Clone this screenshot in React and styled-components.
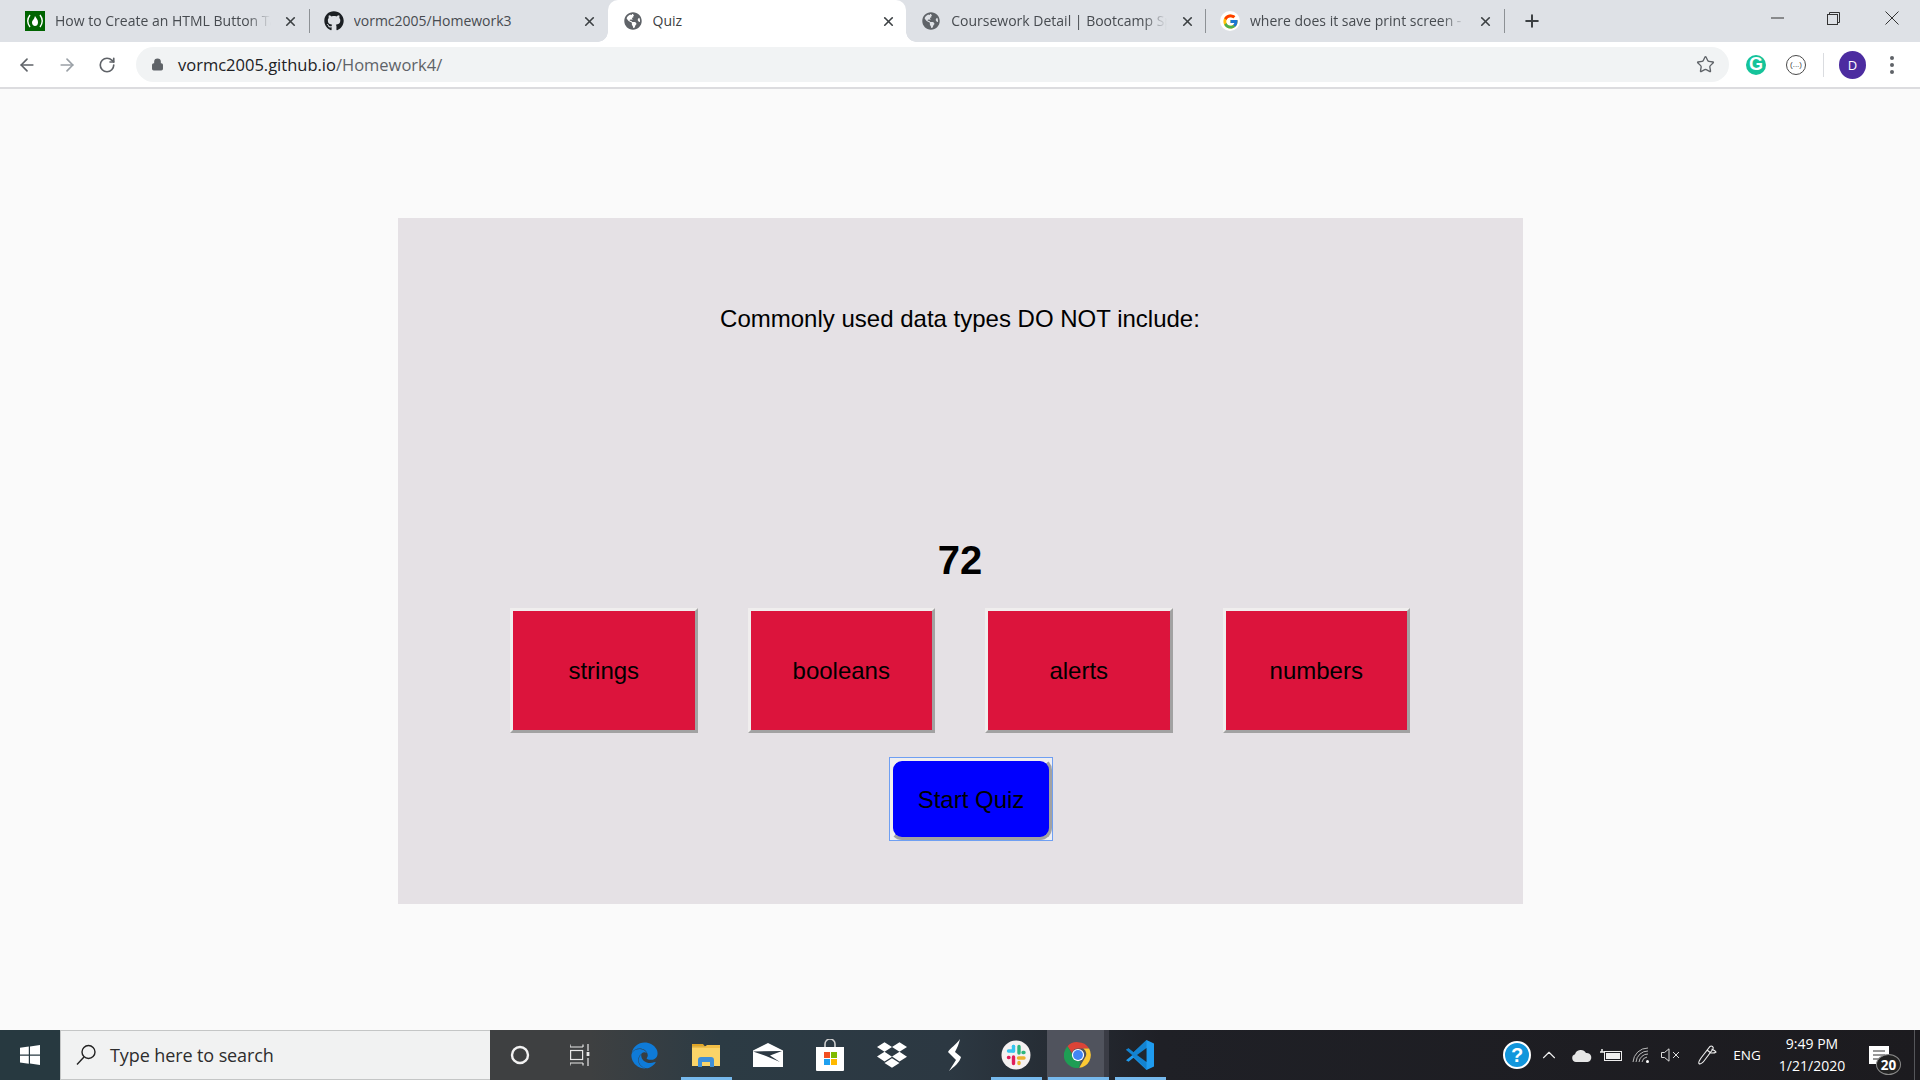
import React from "react";
import styled, { createGlobalStyle } from "styled-components";
import { ArrowLeft, ArrowRight, RotateCw, Lock, Star, X, Plus, ChevronUp } from "lucide-react";
import { FaGithub, FaGlobeAmericas, FaDropbox, FaEdge } from "react-icons/fa";
import { FcGoogle } from "react-icons/fc";

const Global = createGlobalStyle`
  html, body { margin: 0; padding: 0; height: 100%; overflow: hidden; }
  body { font-family: "Liberation Sans", Arial, sans-serif; background: #fafafa; }
  #root { height: 100%; }
`;
const Screen = styled.div`width:1920px;height:1080px;display:flex;flex-direction:column;overflow:hidden;`;
const TabBar = styled.div`height:42px;flex:none;background:#dee1e6;display:flex;align-items:stretch;padding-left:10px;`;
const Tab = styled.div`
  width:298.75px;flex:none;position:relative;box-sizing:border-box;display:flex;align-items:center;padding:0 8px 0 15px;gap:10px;
  font-family:"Open Sans","Noto Sans",sans-serif;font-size:14px;color:${p=>p.$active?"#3c4043":"#474b50"};
  background:${p=>p.$active?"#fff":"transparent"};
  border-radius:${p=>p.$active?"10px 10px 0 0":"0"};
  ${p=>p.$sep?`&::after{content:"";position:absolute;right:-1px;top:9px;height:24px;width:1px;background:#8d9195;}`:""}
  ${p=>p.$active?`
    &::before{content:"";position:absolute;left:-10px;bottom:0;width:10px;height:10px;background:radial-gradient(circle at 0 0,transparent 9.5px,#fff 10px);}
    &::after{content:"";position:absolute;right:-10px;bottom:0;width:10px;height:10px;background:radial-gradient(circle at 100% 0,transparent 9.5px,#fff 10px);}
  `:""}
`;
const Favicon = styled.span`width:20px;height:20px;flex:none;display:flex;align-items:center;justify-content:center;color:${p=>p.$color||"#5f6368"};`;
const FccIcon = styled.span`width:20px;height:20px;background:#006400;color:#fff;display:flex;align-items:center;justify-content:center;`;
const GoogleBadge = styled.span`width:20px;height:20px;border-radius:50%;background:#fff;display:flex;align-items:center;justify-content:center;`;
const TabTitle = styled.span`flex:1;min-width:0;white-space:nowrap;overflow:hidden;line-height:20px;margin-top:-1px;
  ${p=>p.$fade?"mask-image:linear-gradient(90deg,#000 calc(100% - 24px),transparent);":""}`;
const CloseBtn = styled.span`width:20px;height:20px;flex:none;display:flex;align-items:center;justify-content:center;color:#3c4043;`;
const NewTab = styled.div`width:56px;flex:none;display:flex;align-items:center;justify-content:center;color:#3c4043;`;
const TabSpacer = styled.div`flex:1;`;
const WinControls = styled.div`display:flex;align-items:flex-start;color:#3a3a3a;`;
const WinBtn = styled.div`width:${p=>p.$w}px;height:36px;display:flex;align-items:center;justify-content:center;`;

const Toolbar = styled.div`height:45px;flex:none;background:#fff;display:flex;align-items:center;box-sizing:border-box;padding:0 0 0 7px;color:#5f6368;`;
const NavBtn = styled.div`width:40px;height:35px;display:flex;align-items:center;justify-content:center;color:${p=>p.$off?"#9aa0a6":"#5f6368"};`;
const Omnibox = styled.div`margin-left:9px;width:1593px;height:35px;background:#f1f3f4;border-radius:18px;display:flex;align-items:center;padding:0 14px 0 15px;box-sizing:border-box;`;
const Url = styled.div`flex:1;margin-left:14px;font-family:"Open Sans","Noto Sans",sans-serif;font-size:16.5px;color:#5f6368;white-space:nowrap;`;
const Host = styled.span`color:#202124;`;
const ExtGroup = styled.div`display:flex;align-items:center;margin-left:7px;`;
const Ext = styled.div`width:40px;height:35px;display:flex;align-items:center;justify-content:center;`;
const GrammarlyDot = styled.div`width:20px;height:20px;border-radius:50%;background:#15c39a;color:#fff;font:bold 18px "Liberation Sans",sans-serif;display:flex;align-items:center;justify-content:center;`;
const RingExt = styled.div`width:18px;height:18px;border-radius:50%;border:1px solid #4a4a4a;color:#444;font:8px "Liberation Sans",sans-serif;display:flex;align-items:center;justify-content:center;`;
const ToolSep = styled.div`width:1px;height:24px;background:#dadce0;margin:0 9px 0 7px;`;
const Avatar = styled.div`width:27px;height:28px;border-radius:50%;background:#4c2ca0;color:#fff;font:13px "Open Sans",sans-serif;display:flex;align-items:center;justify-content:center;margin:0 10px 0 6px;`;
const Kebab = styled.div`width:4px;display:flex;flex-direction:column;gap:3px;margin-left:14px;`;
const KDot = styled.span`width:4px;height:4px;border-radius:50%;background:#5f6368;`;
const Divider = styled.div`height:2px;flex:none;background:#dcdcdf;`;

const Page = styled.main`flex:1;min-height:0;background:#fafafa;display:flex;justify-content:center;align-items:flex-start;`;
const Panel = styled.section`margin-top:129px;width:1125px;height:686px;background:#e5e1e5;display:flex;flex-direction:column;align-items:center;`;
const Question = styled.p`margin:87px 0 0;font-size:24px;line-height:28px;color:#000;`;
const Timer = styled.div`margin-top:204px;font-size:40px;font-weight:bold;line-height:46px;color:#000;`;
const Answers = styled.div`margin-top:25px;display:flex;gap:50px;`;
const Answer = styled.button`width:187.5px;height:125px;box-sizing:border-box;background:#dc143c;color:#000;font:24px "Liberation Sans",Arial,sans-serif;border:3px solid;border-color:#f0eeee #a2a2a2 #a2a2a2 #f0eeee;padding:0;`;
const FocusRing = styled.div`margin:24px 0 0 22px;border:1px solid #6f9ff2;background:#eeeef2;display:flex;`;
const Start = styled.button`width:162px;height:82px;box-sizing:border-box;background:#00f;color:#000;font:24px "Liberation Sans",Arial,sans-serif;border:3px solid;border-color:#f0eeee #a2a2a2 #a2a2a2 #f0eeee;border-radius:12px;padding:1px 0 0;`;

const Taskbar = styled.footer`height:50px;flex:none;box-sizing:border-box;display:flex;align-items:stretch;color:#fff;
  background:linear-gradient(90deg,#273940 0,#273940 60px,#3e4041 490px,#3e4041 590px,#2c3b44 720px,#2c3842 950px,#1f2026 1160px,#1c1b1f 1920px);`;
const StartBtn = styled.div`width:60px;flex:none;display:flex;align-items:center;justify-content:center;`;
const SearchBox = styled.div`width:430px;flex:none;box-sizing:border-box;background:#f1f2f2;border:1px solid #c4c6c6;border-width:1px 0 1px 1px;display:flex;align-items:center;padding-left:14px;gap:13px;color:#2d2d2d;font:18px "Open Sans","Noto Sans",sans-serif;`;
const SearchText = styled.span`letter-spacing:-.1px;`;
const Slots = styled.div`display:flex;`;
const WideSlots = styled.div`display:flex;margin-left:3px;`;
const Slot = styled.div`width:${p=>p.$w||62}px;flex:none;position:relative;display:flex;align-items:center;justify-content:center;
  ${p=>p.$focus?"background:linear-gradient(90deg,#50535d 0,#50535d 57px,#3a3c45 57px);":""}
  ${p=>p.$on?`&::after{content:"";position:absolute;bottom:0;left:${p.$focus?"1px":"6px"};right:${p.$focus?"0":"5px"};height:3px;background:#76b9ed;}`:""}
`;
const Tray = styled.div`margin-left:auto;display:flex;align-items:center;`;
const TrayItem = styled.div`width:${p=>p.$w}px;flex:none;height:100%;display:flex;align-items:center;justify-content:center;`;
const Lang = styled.div`width:40px;text-align:center;font:13.5px "Open Sans",sans-serif;color:#fff;`;
const Clock = styled.div`width:90px;margin-right:7px;text-align:center;font:14px/22px "Open Sans",sans-serif;color:#fff;`;
const Notify = styled.div`width:50px;height:100%;box-sizing:border-box;position:relative;display:flex;align-items:center;padding-left:5px;`;
const Badge = styled.div`position:absolute;left:12px;top:24px;width:25px;height:21px;border-radius:50%;box-sizing:border-box;border:1px solid #8a8a8a;background:#222;color:#fff;font:bold 13.5px "Open Sans",sans-serif;display:flex;align-items:center;justify-content:center;`;
const HelpIcon = styled.div`width:24px;height:24px;border-radius:50%;border:2px solid #fff;background:#1296dc;color:#fff;font:bold 20px "Liberation Sans",sans-serif;display:flex;align-items:center;justify-content:center;`;
const EdgeLine = styled.div`width:6px;height:100%;box-sizing:border-box;border-left:1px solid #55565a;`;

const ChromeLogo = () => (
  <svg width="28" height="28" viewBox="0 0 48 48">
    <path d="M24 2a22 22 0 0 1 19 11H24a11 11 0 0 0-10.5 7.5L6 9A22 22 0 0 1 24 2z" fill="#db4437"/>
    <path d="M43 13a22 22 0 0 1-17 33l9.5-16.5A11 11 0 0 0 33 13z" fill="#fcc934"/>
    <path d="M6 9l9.5 16.5A11 11 0 0 0 28 34.5L26 46A22 22 0 0 1 6 9z" fill="#1e9e54"/>
    <circle cx="24" cy="24" r="10.5" fill="#fff"/><circle cx="24" cy="24" r="8.5" fill="#4285f4"/>
  </svg>
);
const SlackLogo = () => (
  <svg width="30" height="30" viewBox="0 0 30 30">
    <circle cx="15" cy="15" r="14.5" fill="#f4f1f1"/>
    <g strokeWidth="3.4" strokeLinecap="round">
      <path d="M12.5 6.5v0M12.5 11H7.5" stroke="#36c5f0"/><path d="M12.5 6.5v4.5" stroke="#36c5f0"/>
      <path d="M18 6.5v6.5M23 12.5h-1" stroke="#2eb67d"/>
      <path d="M18 23.5v-1M17.5 18H23" stroke="#ecb22e"/>
      <path d="M12.5 23.5V17M7.5 17.5h.5" stroke="#e01e5a"/>
    </g>
  </svg>
);
const VSCode = () => (
  <svg width="30" height="32" viewBox="0 0 30 32">
    <path d="M21.5 1l7.5 3.5v23L21.5 31 8.5 18.8l-5 3.9L1 21.3 7.5 16 1 10.7l2.5-1.4 5 3.9z" fill="#1f9cf0"/>
    <path d="M21.5 1L8.5 13.2l-5-3.9L1 10.7 15 24 21.5 31z" fill="#0a6fb8" opacity=".55"/>
    <path d="M21.500 9L12 16l9.500 7z" fill="#202830"/>
  </svg>
);
const Explorer = () => (
  <svg width="28" height="26" viewBox="0 0 28 26">
    <path d="M0 2h11l2 2.5H0z" fill="#e0a526"/><path d="M0 4.5h28V24H0z" fill="#fbd468"/>
    <path d="M0 4.5h13l2-1.5h13v3H0z" fill="#f3bf47"/>
    <path d="M6 25v-7a3 3 0 0 1 3-3h10a3 3 0 0 1 3 3v7h-4v-5h-8v5z" fill="#3f8fd8"/>
  </svg>
);
const Mail = () => (
  <svg width="30" height="24" viewBox="0 0 30 24">
    <path d="M0 7.500L15 0l15 7.500V24H0z" fill="#fff"/>
    <path d="M0 8.500L29 8 17 12.500 27 19 13 13z" fill="#2c3842"/>
  </svg>
);
const Store = () => (
  <svg width="28" height="32" viewBox="0 0 28 32">
    <path d="M9 8V5a5 5 0 0 1 10 0v3" fill="none" stroke="#cfcfcf" strokeWidth="1.6"/>
    <path d="M0 8h28v23a1 1 0 0 1-1 1H1a1 1 0 0 1-1-1z" fill="#fff"/>
    <path d="M8 13h6v6H8z" fill="#f25022"/><path d="M15 13h6v6h-6z" fill="#7fba00"/>
    <path d="M8 20h6v6H8z" fill="#1fa0f0"/><path d="M15 20h6v6h-6z" fill="#ffb900"/>
  </svg>
);
const Fuse = () => (
  <svg width="14" height="32" viewBox="0 0 14 32">
    <path d="M13 0C10 5 3 9 1 13l8 8-7 11c5-4 11-9 12-14l-6-5c2-4 4-8 5-13z" fill="#fff"/>
  </svg>
);
const Windows = () => (
  <svg width="20" height="20" viewBox="0 0 20 20"><path d="M0 2.8l8.8-1.2v8H0zM10 1.4L20 0v9.6H10zM0 10.8h8.8v8L0 17.5zM10 10.8h10V20l-10-1.4z" fill="#fff"/></svg>
);
const SearchGlyph = () => (
  <svg width="22" height="22" viewBox="0 0 22 22" fill="none" stroke="#222" strokeWidth="1.4"><circle cx="13.5" cy="8" r="6.5"/><path d="M9 13L2 20.5"/></svg>
);
const TaskView = () => (
  <svg width="20" height="22" viewBox="0 0 20 22" fill="none" stroke="#e8e8e8" strokeWidth="1.2"><path d="M0 3h13M0 .6v2.4M13 .6v2.4M0 19h13M0 21.5V19M13 21.5V19"/><rect x=".6" y="6.5" width="12" height="9"/><path d="M18 0v7M18 14v8"/><rect x="16.6" y="8" width="2.8" height="4" fill="#e8e8e8" stroke="none"/></svg>
);
const Cloud = () => (<svg width="22" height="14" viewBox="0 0 22 14"><path d="M6 14a4 4 0 0 1-1-7.8A6 6 0 0 1 16 5a4.5 4.5 0 0 1 1.5 9z" fill="#e6e6e6"/></svg>);
const Battery = () => (<svg width="22" height="14" viewBox="0 0 22 14" fill="none" stroke="#eee"><rect x="4.5" y="3.5" width="17" height="9"/><rect x="6" y="5" width="14" height="6" fill="#eee" stroke="none"/><path d="M0 4h4M2 1v3" strokeWidth="1.5"/></svg>);
const Wifi = () => (<svg width="18" height="18" viewBox="0 0 18 18" fill="none" stroke="#bbb" strokeWidth="1"><path d="M1 16A15 15 0 0 1 16 2M4 16A12 12 0 0 1 16 5M7 16A9 9 0 0 1 16 8M10 16a6 6 0 0 1 5-5"/><circle cx="15.5" cy="15.5" r="1.5" fill="#fff" stroke="none"/></svg>);
const Volume = () => (<svg width="20" height="14" viewBox="0 0 20 14" fill="none" stroke="#ddd"><path d="M.5 4.5h3L8 .8v12.4L3.5 9.5h-3zM12 4l6 6M18 4l-6 6"/></svg>);
const Pen = () => (<svg width="22" height="22" viewBox="0 0 22 22" fill="none" stroke="#eee" strokeWidth="1.1"><path d="M5 14L14 2.500a2 2 0 0 1 3 2.500L8 17c-1.500 2-4 3.500-5 2.500s.500-3 2-5.500zM11 6l3.500 2.800M15.500 5c2 1 3.500 1.500 4.500 3-1.500 1.500-4 1-6.500 1"/></svg>);
const NoteIcon = () => (<svg width="20" height="18" viewBox="0 0 20 18"><path d="M0 0h20v18H0z" fill="#fff"/><path d="M4 5h12M4 9h12M4 13h9" stroke="#333" strokeWidth="1.2"/></svg>);
const FccGlyph = () => (<svg width="16" height="14" viewBox="0 0 16 14" fill="none" stroke="#fff" strokeWidth="1.4"><path d="M3 1C0 5 0 9 3 13M13 1c3 4 3 8 0 12"/><path d="M8 2c2 3 3 4 3 6.500S9.500 12 8 12s-3-1.500-3-3.500S7 6 8 2z" fill="#fff" stroke="none"/></svg>);
const MinGlyph = () => (<svg width="13" height="2"><path d="M0 1h13" stroke="#333"/></svg>);
const RestoreGlyph = () => (<svg width="13" height="13" viewBox="0 0 13 13" fill="none" stroke="#333"><rect x=".5" y="2.500" width="10" height="10"/><path d="M2.500 2.500V.5h10v10h-2"/></svg>);
const CloseGlyph = () => (<svg width="14" height="14" viewBox="0 0 14 14" stroke="#333"><path d="M.5.5l13 13M13.500.5l-13 13"/></svg>);

const TabClose = () => <CloseBtn><X size={15} strokeWidth={2.6} /></CloseBtn>;

export default function App() {
  return (
    <Screen>
      <Global />
      <TabBar>
        <Tab $sep><Favicon><FccIcon><FccGlyph /></FccIcon></Favicon><TabTitle $fade>How to Create an HTML Button Tag</TabTitle><TabClose /></Tab>
        <Tab><Favicon $color="#1b1f23"><FaGithub size={20} /></Favicon><TabTitle>vormc2005/Homework3</TabTitle><TabClose /></Tab>
        <Tab $active><Favicon><FaGlobeAmericas size={18} /></Favicon><TabTitle>Quiz</TabTitle><TabClose /></Tab>
        <Tab $sep><Favicon><FaGlobeAmericas size={18} /></Favicon><TabTitle $fade>Coursework Detail | Bootcamp Spot</TabTitle><TabClose /></Tab>
        <Tab $sep><Favicon><GoogleBadge><FcGoogle size={17} /></GoogleBadge></Favicon><TabTitle $fade>where does it save print screen - Google Search</TabTitle><TabClose /></Tab>
        <NewTab><Plus size={20} strokeWidth={2.4} /></NewTab>
        <TabSpacer />
        <WinControls>
          <WinBtn $w={50}><MinGlyph /></WinBtn><WinBtn $w={62}><RestoreGlyph /></WinBtn><WinBtn $w={56}><CloseGlyph /></WinBtn>
        </WinControls>
      </TabBar>
      <Toolbar>
        <NavBtn><ArrowLeft size={20} strokeWidth={2} /></NavBtn>
        <NavBtn $off><ArrowRight size={20} strokeWidth={2} /></NavBtn>
        <NavBtn><RotateCw size={18} strokeWidth={2.2} /></NavBtn>
        <Omnibox>
          <Lock size={13} fill="#5f6368" strokeWidth={2.2} />
          <Url><Host>vormc2005.github.io</Host>/Homework4/</Url>
          <Star size={19} strokeWidth={1.7} color="#5f6368" />
        </Omnibox>
        <ExtGroup>
          <Ext><GrammarlyDot>G</GrammarlyDot></Ext>
          <Ext><RingExt>(...)</RingExt></Ext>
          <ToolSep />
          <Avatar>D</Avatar>
          <Kebab><KDot /><KDot /><KDot /></Kebab>
        </ExtGroup>
      </Toolbar>
      <Divider />
      <Page>
        <Panel>
          <Question>Commonly used data types DO NOT include:</Question>
          <Timer>72</Timer>
          <Answers>
            <Answer>strings</Answer>
            <Answer>booleans</Answer>
            <Answer>alerts</Answer>
            <Answer>numbers</Answer>
          </Answers>
          <FocusRing><Start>Start Quiz</Start></FocusRing>
        </Panel>
      </Page>
      <Taskbar>
        <StartBtn><Windows /></StartBtn>
        <SearchBox><SearchGlyph /><SearchText>Type here to search</SearchText></SearchBox>
        <Slots>
          <Slot $w={60}><svg width="20" height="20"><circle cx="10" cy="10" r="8" fill="none" stroke="#f2f2f2" strokeWidth="2.4"/></svg></Slot>
          <Slot $w={60}><TaskView /></Slot>
        </Slots>
        <WideSlots>
          <Slot><FaEdge size={27} color="#0f7bd8" /></Slot>
          <Slot $on><Explorer /></Slot>
          <Slot><Mail /></Slot>
          <Slot><Store /></Slot>
          <Slot><FaDropbox size={30} color="#fff" /></Slot>
          <Slot><Fuse /></Slot>
          <Slot $on><SlackLogo /></Slot>
          <Slot $on $focus><ChromeLogo /></Slot>
          <Slot $on><VSCode /></Slot>
        </WideSlots>
        <Tray>
          <TrayItem $w={30}><HelpIcon>?</HelpIcon></TrayItem>
          <TrayItem $w={34}><ChevronUp size={22} strokeWidth={1.2} color="#eee" /></TrayItem>
          <TrayItem $w={30}><Cloud /></TrayItem>
          <TrayItem $w={30}><Battery /></TrayItem>
          <TrayItem $w={30}><Wifi /></TrayItem>
          <TrayItem $w={30}><Volume /></TrayItem>
          <TrayItem $w={41}><Pen /></TrayItem>
          <Lang>ENG</Lang>
          <Clock>9:49 PM<br />1/21/2020</Clock>
          <Notify><NoteIcon /><Badge>20</Badge></Notify>
          <EdgeLine />
        </Tray>
      </Taskbar>
    </Screen>
  );
}
